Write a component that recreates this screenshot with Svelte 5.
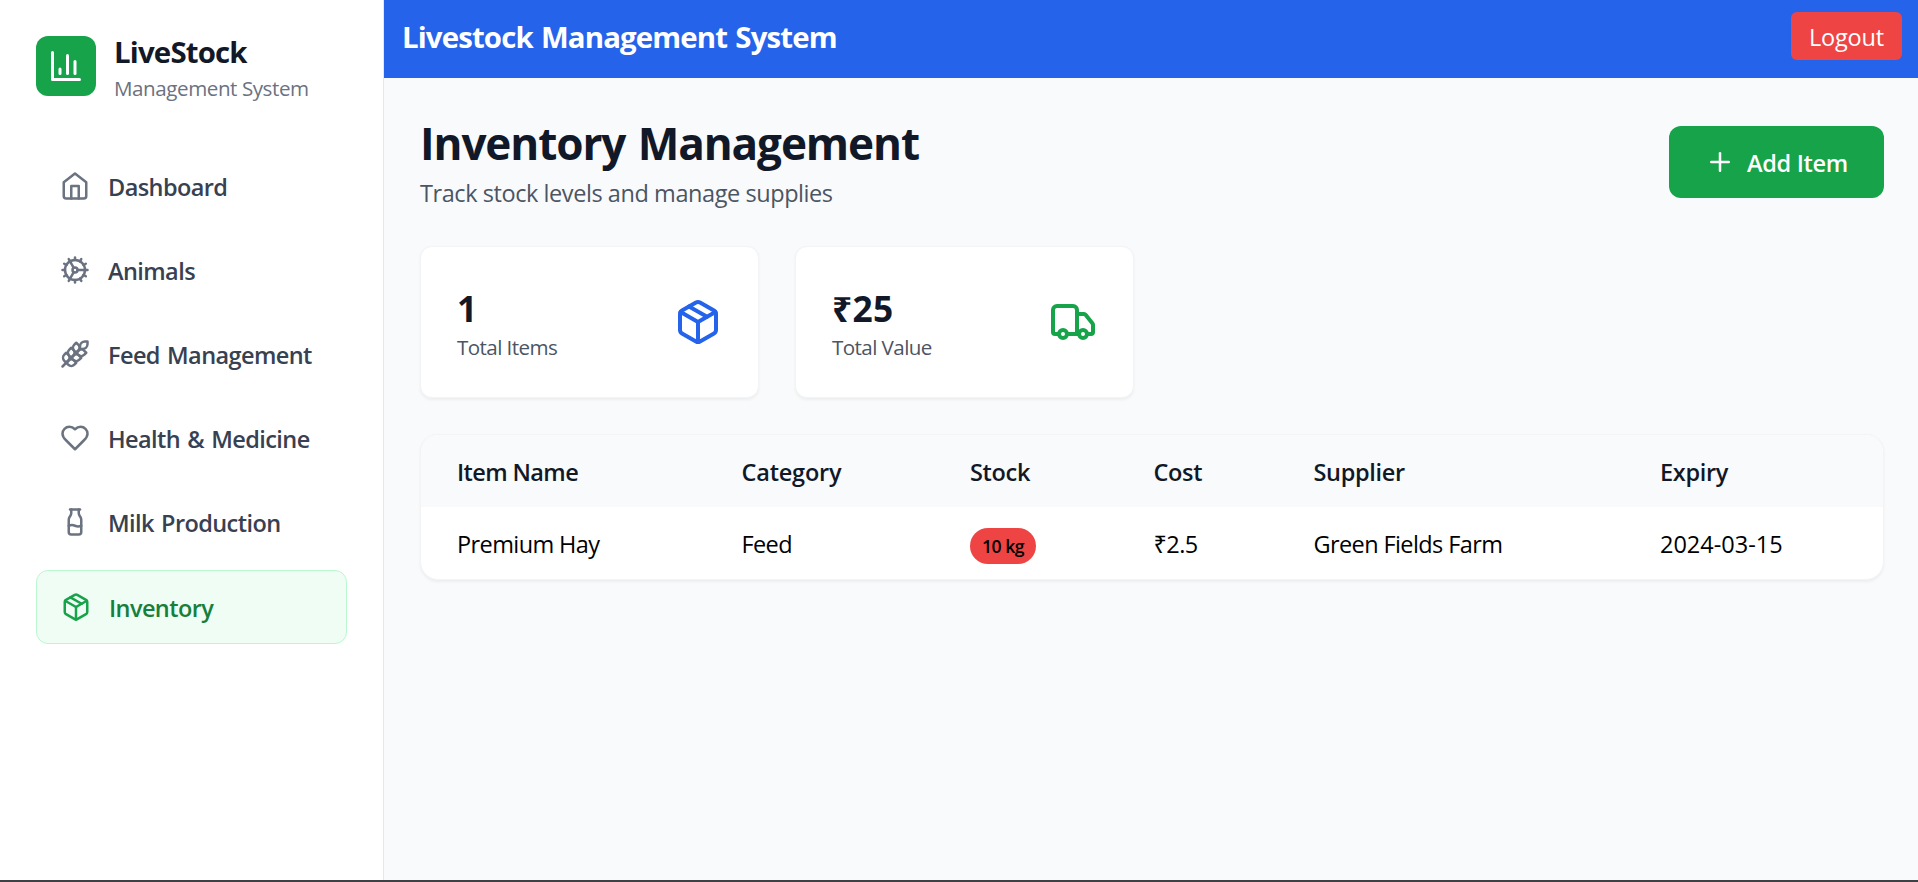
<script>
  const icons = {
    chart: ["M3 3v18h18", "M18 17V9", "M13 17V5", "M8 17v-3"],
    home: [
      "m3 9 9-7 9 7v11a2 2 0 0 1-2 2H5a2 2 0 0 1-2-2z",
      "M9 22V12h6v10",
    ],
    cog: [
      "M12 20a8 8 0 1 0 0-16 8 8 0 0 0 0 16Z",
      "M12 14a2 2 0 1 0 0-4 2 2 0 0 0 0 4Z",
      "M12 2v2",
      "M12 22v-2",
      "m17 20.66-1-1.73",
      "M11 10.27 7 3.34",
      "m20.66 17-1.73-1",
      "m3.34 7 1.73 1",
      "M14 12h8",
      "M2 12h2",
      "m20.66 7-1.73 1",
      "m3.34 17 1.73-1",
      "m17 3.34-1 1.73",
      "m11 13.73-4 6.93",
    ],
    wheat: [
      "M2 22 16 8",
      "M3.47 12.53 5 11l1.53 1.53a3.5 3.5 0 0 1 0 4.94L5 19l-1.53-1.53a3.5 3.5 0 0 1 0-4.94Z",
      "M7.47 8.53 9 7l1.53 1.53a3.5 3.5 0 0 1 0 4.94L9 15l-1.53-1.53a3.5 3.5 0 0 1 0-4.94Z",
      "M11.47 4.53 13 3l1.53 1.53a3.5 3.5 0 0 1 0 4.94L13 11l-1.53-1.53a3.5 3.5 0 0 1 0-4.94Z",
      "M20 2h2v2a4 4 0 0 1-4 4h-2V6a4 4 0 0 1 4-4Z",
      "M11.47 17.47 13 19l-1.53 1.53a3.5 3.5 0 0 1-4.94 0L5 19l1.53-1.53a3.5 3.5 0 0 1 4.94 0Z",
      "M15.47 13.47 17 15l-1.53 1.53a3.5 3.5 0 0 1-4.94 0L9 15l1.53-1.53a3.5 3.5 0 0 1 4.94 0Z",
      "M19.47 9.47 21 11l-1.53 1.53a3.5 3.5 0 0 1-4.94 0L13 11l1.53-1.53a3.5 3.5 0 0 1 4.94 0Z",
    ],
    heart: [
      "M19 14c1.49-1.46 3-3.21 3-5.5A5.5 5.5 0 0 0 16.5 3c-1.76 0-3 .5-4.5 2-1.5-1.5-2.74-2-4.5-2A5.5 5.5 0 0 0 2 8.5c0 2.3 1.5 4.05 3 5.5l7 7Z",
    ],
    milk: [
      "M8 2h8",
      "M9 2v2.789a4 4 0 0 1-.672 2.219l-.656.984A4 4 0 0 0 7 10.212V20a2 2 0 0 0 2 2h6a2 2 0 0 0 2-2v-9.789a4 4 0 0 0-.672-2.219l-.656-.984A4 4 0 0 1 15 4.788V2",
      "M7 15a6.472 6.472 0 0 1 5 0 6.47 6.47 0 0 0 5 0",
    ],
    box: [
      "m7.5 4.27 9 5.15",
      "M21 8a2 2 0 0 0-1-1.73l-7-4a2 2 0 0 0-2 0l-7 4A2 2 0 0 0 3 8v8a2 2 0 0 0 1 1.73l7 4a2 2 0 0 0 2 0l7-4A2 2 0 0 0 21 16Z",
      "m3.3 7 8.7 5 8.7-5",
      "M12 22V12",
    ],
    truck: [
      "M14 18V6a2 2 0 0 0-2-2H4a2 2 0 0 0-2 2v11a1 1 0 0 0 1 1h2",
      "M15 18H9",
      "M19 18h2a1 1 0 0 0 1-1v-3.65a1 1 0 0 0-.22-.624l-3.48-4.35A1 1 0 0 0 17.52 8H14",
      "M17 20a2 2 0 1 0 0-4 2 2 0 0 0 0 4Z",
      "M7 20a2 2 0 1 0 0-4 2 2 0 0 0 0 4Z",
    ],
    plus: ["M5 12h14", "M12 5v14"],
  };

  const menu = [
    { label: "Dashboard", icon: "home" },
    { label: "Animals", icon: "cog" },
    { label: "Feed Management", icon: "wheat" },
    { label: "Health & Medicine", icon: "heart" },
    { label: "Milk Production", icon: "milk" },
    { label: "Inventory", icon: "box" },
  ];

  let active = $state("Inventory");

  let items = $state([
    {
      name: "Premium Hay",
      category: "Feed",
      stock: 10,
      unit: "kg",
      cost: 2.5,
      supplier: "Green Fields Farm",
      expiry: "2024-03-15",
    },
  ]);

  let totalValue = $derived(
    items.reduce((sum, item) => sum + item.stock * item.cost, 0)
  );
</script>

{#snippet icon(name, size)}
  <svg
    class="icon"
    width={size}
    height={size}
    viewBox="0 0 24 24"
    fill="none"
    stroke="currentColor"
    stroke-width="2"
    stroke-linecap="round"
    stroke-linejoin="round"
  >
    {#each icons[name] as d}
      <path {d} />
    {/each}
  </svg>
{/snippet}

<div class="app">
  <aside class="sidebar">
    <div class="brand">
      <div class="logo">{@render icon("chart", 36)}</div>
      <div>
        <div class="brand-name">LiveStock</div>
        <div class="brand-sub">Management System</div>
      </div>
    </div>
    <nav>
      {#each menu as item}
        <button
          class="nav-item"
          class:active={active === item.label}
          onclick={() => (active = item.label)}
        >
          {@render icon(item.icon, 30)}
          <span>{item.label}</span>
        </button>
      {/each}
    </nav>
  </aside>

  <div class="content">
    <header class="topbar">
      <div class="title">Livestock Management System</div>
      <button class="logout">Logout</button>
    </header>

    <main>
      <div class="page-head">
        <div>
          <h1>Inventory Management</h1>
          <p>Track stock levels and manage supplies</p>
        </div>
        <button class="add">
          {@render icon("plus", 30)}
          <span>Add Item</span>
        </button>
      </div>

      <div class="stats">
        <div class="card">
          <div class="figures">
            <div class="value">{items.length}</div>
            <div class="label">Total Items</div>
          </div>
          <div class="blue">{@render icon("box", 48)}</div>
        </div>
        <div class="card">
          <div class="figures">
            <div class="value">₹{totalValue}</div>
            <div class="label">Total Value</div>
          </div>
          <div class="green">{@render icon("truck", 48)}</div>
        </div>
      </div>

      <div class="table-card">
        <table>
          <thead>
            <tr>
              <th class="c-name">Item Name</th>
              <th class="c-category">Category</th>
              <th class="c-stock">Stock</th>
              <th class="c-cost">Cost</th>
              <th class="c-supplier">Supplier</th>
              <th>Expiry</th>
            </tr>
          </thead>
          <tbody>
            {#each items as item}
              <tr>
                <td>{item.name}</td>
                <td>{item.category}</td>
                <td><span class="badge">{item.stock} {item.unit}</span></td>
                <td>₹{item.cost}</td>
                <td>{item.supplier}</td>
                <td class="date">{item.expiry}</td>
              </tr>
            {/each}
          </tbody>
        </table>
      </div>
    </main>
  </div>
</div>
<div class="edge"></div>

<style>
  :global(body) {
    overflow: hidden;
    background: #f9fafb;
  }

  .app {
    width: 1920px;
    height: 880px;
    display: flex;
    overflow: hidden;
    font-family: "Segoe UI", "Open Sans", "Noto Sans", sans-serif;
    font-size: 23.5px;
    line-height: 36px;
    color: #000;
    background: #f9fafb;
  }

  .edge {
    height: 2px;
    background: #3f4043;
  }

  .icon {
    display: block;
    flex-shrink: 0;
  }

  button {
    font: inherit;
    color: inherit;
    border: 0;
    margin: 0;
    cursor: pointer;
  }

  .sidebar {
    box-sizing: border-box;
    width: 384px;
    flex-shrink: 0;
    padding: 31px 36px 0;
    background: #fff;
    border-right: 1px solid #e5e7eb;
  }

  .brand {
    display: flex;
    align-items: center;
    gap: 18px;
    margin-bottom: 47px;
  }

  .logo {
    width: 60px;
    height: 60px;
    display: grid;
    place-items: center;
    margin-top: -2px;
    border-radius: 12px;
    color: #fff;
    background: #16a34a;
  }

  .brand-name {
    font-size: 29.4px;
    font-weight: 700;
    line-height: 42px;
    letter-spacing: -0.82px;
    color: #111827;
  }

  .brand-sub {
    font-size: 20.6px;
    line-height: 30px;
    letter-spacing: -0.44px;
    color: #6b7280;
  }

  nav {
    display: flex;
    flex-direction: column;
    gap: 12px;
  }

  .nav-item {
    display: flex;
    align-items: center;
    gap: 18px;
    padding: 18px 24px;
    border-radius: 12px;
    background: none;
    color: #6b7280;
    text-align: left;
  }

  .nav-item span {
    font-weight: 600;
    letter-spacing: -0.58px;
    word-spacing: 1.6px;
    white-space: nowrap;
    padding-top: 1px;
    margin-bottom: -1px;
    color: #374151;
  }

  .nav-item.active {
    border: 1px solid #bbf7d0;
    background: #f0fdf4;
    color: #16a34a;
  }

  .nav-item.active span {
    color: #15803d;
  }

  .content {
    flex: 1;
    min-width: 0;
  }

  .topbar {
    display: flex;
    justify-content: space-between;
    align-items: center;
    padding: 12px 18px 18px;
    height: 48px;
    color: #fff;
    background: #2563eb;
  }

  .title {
    font-size: 29.4px;
    font-weight: 700;
    letter-spacing: -0.86px;
    word-spacing: 1.4px;
    padding-top: 2px;
  }

  .logout {
    width: 111px;
    height: 48px;
    padding: 2px 0 0;
    border-radius: 6px;
    letter-spacing: -0.2px;
    background: #ef4444;
  }

  main {
    padding: 36px;
  }

  .page-head {
    display: flex;
    justify-content: space-between;
    align-items: center;
    height: 96px;
    margin-bottom: 36px;
  }

  h1 {
    margin: 3px 0 5px;
    font-size: 44.1px;
    font-weight: 700;
    line-height: 54px;
    letter-spacing: -1.1px;
    word-spacing: 2px;
    color: #111827;
  }

  p {
    margin: 0;
    letter-spacing: -0.43px;
    color: #4b5563;
  }

  .add {
    box-sizing: border-box;
    width: 215px;
    height: 72px;
    display: flex;
    align-items: center;
    gap: 12px;
    padding: 0 36px;
    border-radius: 12px;
    color: #fff;
    background: #16a34a;
  }

  .add span {
    padding-top: 2px;
    font-weight: 600;
    letter-spacing: -0.3px;
    white-space: nowrap;
  }

  .stats {
    display: grid;
    grid-template-columns: repeat(4, 1fr);
    gap: 36px;
    margin-bottom: 36px;
  }

  .card {
    display: flex;
    justify-content: space-between;
    align-items: center;
    padding: 36px;
    border: 1px solid #f3f4f6;
    border-radius: 12px;
    background: #fff;
    box-shadow: 0 1.5px 3px rgba(0, 0, 0, 0.05);
  }

  .figures {
    padding-top: 1px;
    margin-bottom: -1px;
  }

  .value {
    font-size: 35.3px;
    font-weight: 700;
    line-height: 48px;
    letter-spacing: 0.3px;
    color: #111827;
  }

  .label {
    font-size: 20.6px;
    line-height: 30px;
    letter-spacing: -0.58px;
    color: #4b5563;
  }

  .blue {
    color: #2563eb;
  }

  .green {
    color: #16a34a;
  }

  .table-card {
    overflow: hidden;
    border: 1px solid #f3f4f6;
    border-radius: 18px;
    background: #fff;
    box-shadow: 0 1.5px 3px rgba(0, 0, 0, 0.05);
  }

  table {
    width: 100%;
    table-layout: fixed;
    border-collapse: collapse;
  }

  thead {
    background: #f9fafb;
  }

  th,
  td {
    box-sizing: border-box;
    height: 72px;
    padding: 2px 0 0 36px;
    text-align: left;
    white-space: nowrap;
  }

  th {
    font-weight: 600;
    letter-spacing: -0.32px;
    color: #111827;
  }

  td {
    letter-spacing: -0.6px;
  }

  .date {
    letter-spacing: 0;
  }

  .c-name {
    width: 284.5px;
    letter-spacing: -0.6px;
  }

  .c-category {
    width: 228.5px;
    letter-spacing: -0.2px;
  }

  .c-stock {
    width: 183.5px;
  }

  .c-cost {
    width: 160px;
  }

  .c-supplier {
    width: 346.5px;
  }

  .badge {
    display: block;
    width: 66px;
    height: 36px;
    margin-top: 4px;
    border-radius: 18px;
    font-size: 17.6px;
    font-weight: 600;
    line-height: 37px;
    letter-spacing: -0.5px;
    text-align: center;
    background: #ef4444;
  }
</style>
